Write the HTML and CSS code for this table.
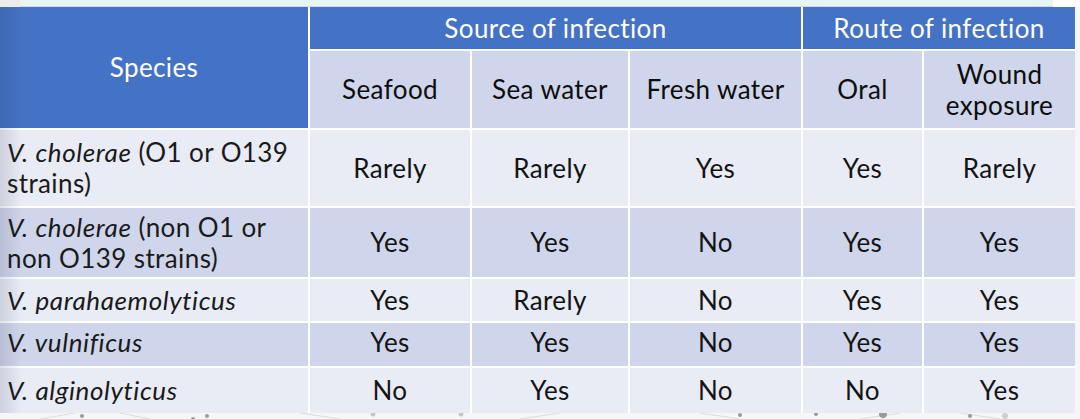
FILE: index.html
```html
<!DOCTYPE html>
<html lang="en">
<head>
<meta charset="utf-8">
<title>Vibrio species – sources and routes of infection</title>
<link rel="stylesheet" href="styles.css">
</head>
<body>
<div class="slide">
  <div class="top-strip"><div class="strip-left"></div><div class="strip-mint"></div></div>
  <div class="table-wrap">
    <table class="vib">
      <colgroup>
        <col class="c-species">
        <col class="c-seafood">
        <col class="c-seawater">
        <col class="c-fresh">
        <col class="c-oral">
        <col class="c-wound">
      </colgroup>
      <thead>
        <tr class="h1">
          <th class="hd" rowspan="2">Species</th>
          <th class="hd" colspan="3">Source of infection</th>
          <th class="hd last" colspan="2">Route of infection</th>
        </tr>
        <tr class="h2">
          <th class="sub">Seafood</th>
          <th class="sub">Sea water</th>
          <th class="sub">Fresh water</th>
          <th class="sub">Oral</th>
          <th class="sub last">Wound<br>exposure</th>
        </tr>
      </thead>
      <tbody>
        <tr class="r1 light">
          <td class="sp"><i>V. cholerae</i> (O1 or O139<br>strains)</td>
          <td>Rarely</td><td>Rarely</td><td>Yes</td><td>Yes</td><td class="last">Rarely</td>
        </tr>
        <tr class="r2 dark">
          <td class="sp"><i>V. cholerae</i> (non O1 or<br>non O139 strains)</td>
          <td>Yes</td><td>Yes</td><td>No</td><td>Yes</td><td class="last">Yes</td>
        </tr>
        <tr class="r3 light">
          <td class="sp"><i>V. parahaemolyticus</i></td>
          <td>Yes</td><td>Rarely</td><td>No</td><td>Yes</td><td class="last">Yes</td>
        </tr>
        <tr class="r4 dark">
          <td class="sp"><i>V. vulnificus</i></td>
          <td>Yes</td><td>Yes</td><td>No</td><td>Yes</td><td class="last">Yes</td>
        </tr>
        <tr class="r5 light">
          <td class="sp"><i>V. alginolyticus</i></td>
          <td>No</td><td>Yes</td><td>No</td><td>No</td><td class="last">Yes</td>
        </tr>
      </tbody>
    </table>
    <div class="shade"></div>
  </div>
  <svg class="net" width="1080" height="6" viewBox="0 0 1080 6" aria-hidden="true">
    <g stroke="#d6d6d6" stroke-width="0.8" fill="none">
      <line x1="40" y1="6" x2="75" y2="0"/>
      <line x1="120" y1="0" x2="150" y2="6"/>
      <line x1="300" y1="0" x2="340" y2="6"/>
      <line x1="520" y1="6" x2="560" y2="0"/>
      <line x1="700" y1="0" x2="740" y2="6"/>
      <line x1="860" y1="6" x2="900" y2="0"/>
      <line x1="960" y1="0" x2="1000" y2="6"/>
    </g>
    <g fill="#9a9a9a">
      <circle cx="82" cy="3" r="2"/>
      <circle cx="193" cy="6" r="2"/>
      <circle cx="207" cy="3" r="2"/>
      <circle cx="373" cy="1" r="2.5" fill="#c8c8c8"/>
      <circle cx="461" cy="1" r="2.5" fill="#c8c8c8"/>
      <circle cx="740" cy="2" r="2"/>
      <circle cx="816" cy="1" r="2"/>
      <circle cx="883" cy="1" r="4"/>
      <circle cx="970" cy="3" r="2"/>
      <circle cx="1005" cy="3" r="3" fill="#cfcfcf"/>
    </g>
  </svg>
</div>
</body>
</html>
```
FILE: styles.css
```css
html, body {
  margin: 0;
  padding: 0;
  background: #f6f6f6;
}

.slide {
  width: 1080px;
  height: 419px;
  overflow: hidden;
  background: #f6f6f6;
  font-family: Lato, "Open Sans", "Liberation Sans", sans-serif;
}

.top-strip {
  display: flex;
  height: 7px;
  background: #ffffff;
}

.strip-left {
  width: 20px;
  background: #ececec;
}

.strip-mint {
  width: 1033px;
  background: #e7f6f2;
  border-bottom: 1px solid #cdd9ef;
  box-sizing: border-box;
}

.table-wrap {
  position: relative;
  width: 1075px;
}

.vib {
  width: 1075px;
  table-layout: fixed;
  border-collapse: separate;
  border-spacing: 0;
  font-size: 26px;
  letter-spacing: 0.4px;
  line-height: 31px;
  color: #141414;
}

.c-species { width: 310px; }
.c-seafood { width: 162px; }
.c-seawater { width: 158px; }
.c-fresh { width: 173px; }
.c-oral { width: 121px; }
.c-wound { width: 151px; }

.vib th,
.vib td {
  padding: 0 2px;
  text-align: center;
  vertical-align: middle;
  border-right: 2px solid #ffffff;
  border-bottom: 2px solid #ffffff;
  box-sizing: border-box;
  font-weight: 400;
}

.vib .last {
  border-right: none;
}

.hd {
  background: #4472c4;
  color: #ffffff;
}

.sub {
  background: #cfd5ea;
  color: #0d0d0d;
}

.h1 { height: 44px; }
.h2 { height: 79px; }
.r1 { height: 78px; }
.r2 { height: 71px; }
.r3 { height: 44px; }
.r4 { height: 45px; }
.r5 { height: 45px; }

.r5 td { border-bottom: none; }

.light td { background: #e9ebf5; }
.dark td { background: #cfd5ea; }

.vib td.sp {
  text-align: left;
  padding-left: 7px;
  color: #1a1a1a;
}

.vib td.sp i {
  letter-spacing: 0.6px;
}

.r4 td { padding-bottom: 4px; }

.shade {
  position: absolute;
  left: 0;
  top: 0;
  bottom: 0;
  width: 22px;
  background: linear-gradient(to right, rgba(40, 50, 80, 0.14), rgba(40, 50, 80, 0));
  pointer-events: none;
}

.net {
  display: block;
}
```
